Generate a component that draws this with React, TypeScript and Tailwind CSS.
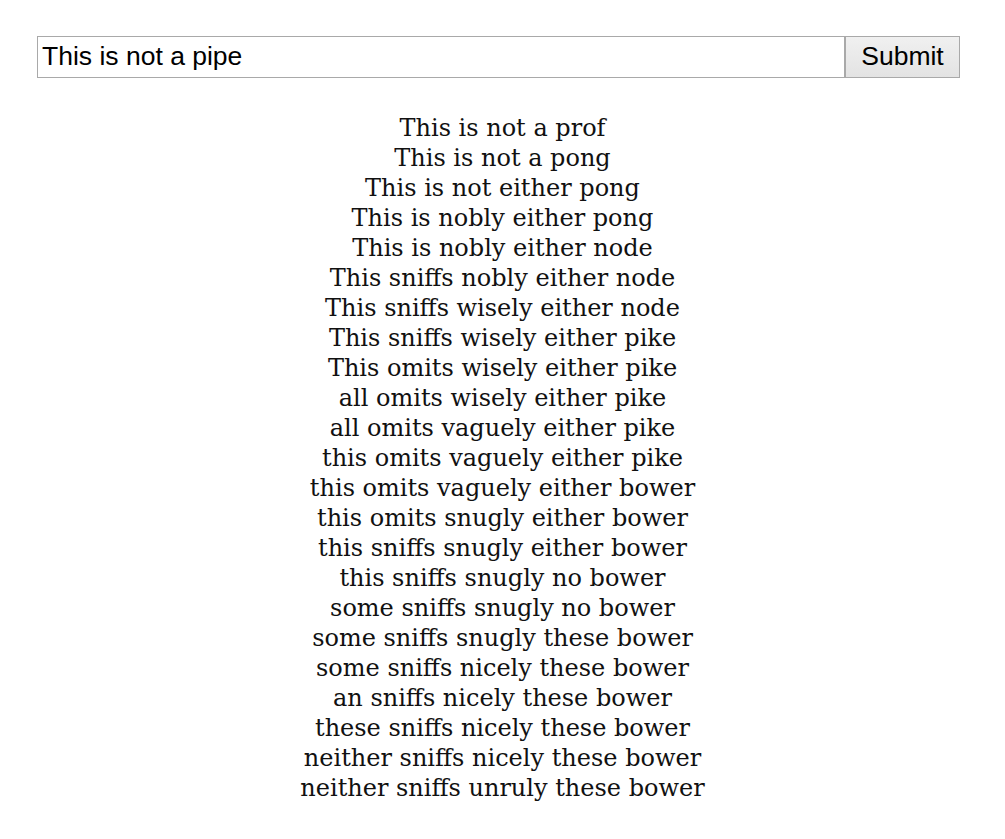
const lines = [
  "This is not a prof",
  "This is not a pong",
  "This is not either pong",
  "This is nobly either pong",
  "This is nobly either node",
  "This sniffs nobly either node",
  "This sniffs wisely either node",
  "This sniffs wisely either pike",
  "This omits wisely either pike",
  "all omits wisely either pike",
  "all omits vaguely either pike",
  "this omits vaguely either pike",
  "this omits vaguely either bower",
  "this omits snugly either bower",
  "this sniffs snugly either bower",
  "this sniffs snugly no bower",
  "some sniffs snugly no bower",
  "some sniffs snugly these bower",
  "some sniffs nicely these bower",
  "an sniffs nicely these bower",
  "these sniffs nicely these bower",
  "neither sniffs nicely these bower",
  "neither sniffs unruly these bower",
]

export default function App() {
  return (
    <div className="min-h-screen bg-white pt-[36px]">
      <form className="flex h-[42px] pl-[37px] pr-[45px]" onSubmit={(e) => e.preventDefault()}>
        <input
          defaultValue="This is not a pipe"
          className="flex-1 min-w-0 border border-[#a9a9a9] bg-white px-[4px] text-[26.5px] text-black outline-none font-['Liberation_Sans',Arial,sans-serif]"
        />
        <button
          type="submit"
          className="w-[115px] border border-[#a9a9a9] bg-gradient-to-b from-[#f0f0f0] to-[#e3e3e3] text-[26.5px] text-black font-['Liberation_Sans',Arial,sans-serif]"
        >
          Submit
        </button>
      </form>
      <div className="mt-[35px] text-center text-[24px] leading-[30px] text-[#111] font-['DejaVu_Serif',Georgia,serif]">
        {lines.map((l, i) => (
          <div key={i}>{l}</div>
        ))}
      </div>
    </div>
  )
}
